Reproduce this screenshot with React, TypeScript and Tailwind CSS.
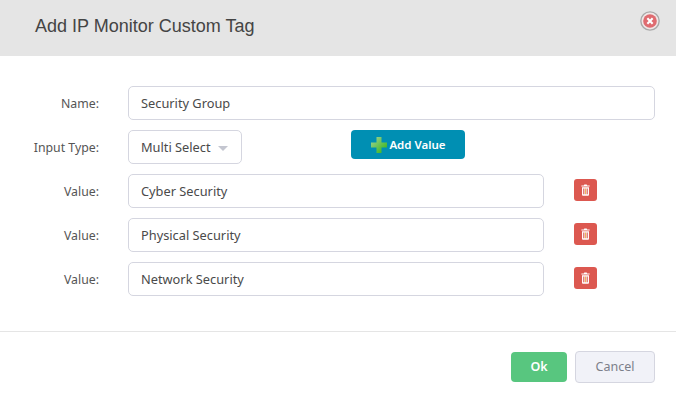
const labelClass = "w-[99px] shrink-0 pt-[3px] text-right text-[12.3px] text-[#555]";
const inputClass =
  "h-[34px] rounded-[5px] border border-[#d5d6e0] bg-white pl-[12px] pr-[13px] pt-[1px] text-[12.8px] text-[#4a4a4a] flex items-center";

const values = ["Cyber Security", "Physical Security", "Network Security"];

function TrashIcon() {
  return (
    <svg width="11" height="12" viewBox="0 0 12 13">
      <path d="M4.2 1.6 4.7.6h2.6l.5 1h2.7v1.2H1.500V1.600z" fill="#fff" />
      <path d="M2.200 3.400h7.600v8.300a1 1 0 0 1-1 1H3.200a1 1 0 0 1-1-1z" fill="#fff" />
      <path d="M3.700 4.800h1v6.400h-1z" fill="#c9302c" />
      <path d="M5.500 4.800h1v6.400h-1z" fill="#f0ad4e" />
      <path d="M7.300 4.800h1v6.400h-1z" fill="#c9302c" />
    </svg>
  );
}

function PlusIcon() {
  return (
    <svg width="16" height="16" viewBox="0 0 16 16">
      <defs>
        <linearGradient id="plusFill" x1="0" y1="0" x2="1" y2="1">
          <stop offset="0" stopColor="#a5d49a" />
          <stop offset="1" stopColor="#2fb30f" />
        </linearGradient>
      </defs>
      <path d="M5.500 0h5v5.500H16v5h-5.500V16h-5v-5.500H0v-5h5.500z" fill="url(#plusFill)" />
    </svg>
  );
}

function CloseIcon() {
  return (
    <svg width="20" height="20" viewBox="0 0 19 19">
      <circle cx="9.500" cy="9.500" r="8.700" fill="#f0e6e6" stroke="#a9a9a9" strokeWidth="1.300" />
      <circle cx="9.500" cy="9.500" r="6.500" fill="#df6b70" />
      <path d="M7 7l5 5M12 7l-5 5" stroke="#fff" strokeWidth="2" />
    </svg>
  );
}

export default function App() {
  return (
    <div
      className="flex h-[401px] w-[676px] flex-col overflow-hidden bg-white"
      style={{ fontFamily: '"Noto Sans", sans-serif' }}
    >
      {/* Header */}
      <div className="flex h-[56px] shrink-0 items-center justify-between bg-[#e5e5e5] pl-[35px] pr-[16px]">
        <h1
          className="mt-[-4px] text-[18px] font-normal text-[#444]"
          style={{ fontFamily: '"Liberation Sans", Arial, sans-serif' }}
        >
          Add IP Monitor Custom Tag
        </h1>
        <div className="mt-[-15px] flex">
          <CloseIcon />
        </div>
      </div>

      {/* Form */}
      <div className="flex h-[275px] shrink-0 flex-col gap-[10px] pt-[30px]">
        <div className="flex h-[34px] items-center gap-[29px]">
          <span className={labelClass}>Name:</span>
          <div className={`${inputClass} w-[527px]`}>Security Group</div>
        </div>

        <div className="flex h-[34px] items-center gap-[29px]">
          <span className={labelClass}>Input Type:</span>
          <div className={`${inputClass} w-[114px] justify-between pr-[12px]`}>
            Multi Select
            <span className="mt-[2px] border-x-[5px] border-t-[5px] border-x-transparent border-t-[#c4c6d0]" />
          </div>
          <button className="mb-[5px] ml-[80px] flex h-[29px] w-[114px] items-center justify-center gap-[2px] rounded-[4px] bg-[#008fb3] pl-[1px] text-[11.5px] font-semibold text-white">
            <PlusIcon />
            Add Value
          </button>
        </div>

        {values.map((value) => (
          <div key={value} className="flex h-[34px] items-center gap-[29px]">
            <span className={labelClass}>Value:</span>
            <div className={`${inputClass} w-[416px]`}>{value}</div>
            <button className="mb-[2px] ml-[1px] flex h-[22px] w-[23px] items-center justify-center rounded-[3px] bg-[#dc5850]">
              <TrashIcon />
            </button>
          </div>
        ))}
      </div>

      {/* Footer */}
      <div className="flex flex-1 items-start justify-end gap-[8px] border-t border-[#e5e5e5] pr-[21px] pt-[19px]">
        <button className="mt-[1px] h-[30px] w-[56px] rounded-[4px] bg-[#58c67f] text-[12.5px] font-semibold text-white">
          Ok
        </button>
        <button className="h-[32px] w-[80px] rounded-[4px] border border-[#d5d6e0] bg-[#f1f2f8] text-[12.5px] text-[#7c7f8a]">
          Cancel
        </button>
      </div>
    </div>
  );
}
